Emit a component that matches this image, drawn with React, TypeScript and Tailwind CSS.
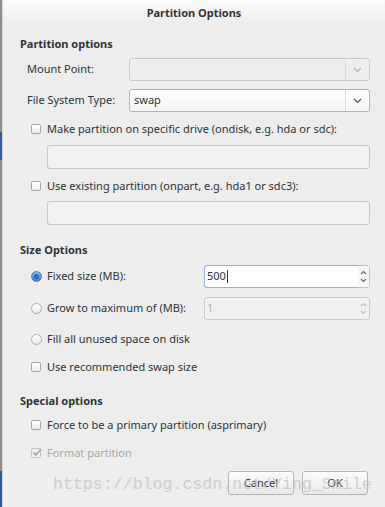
import React from 'react'

const font = { fontFamily: '"Noto Sans", "Open Sans", sans-serif' }

function Chevron({ dim = false }: { dim?: boolean }) {
  return (
    <svg width="9" height="6" viewBox="0 0 9 6" className="block">
      <path d="M1 1 L4.5 4.5 L8 1" fill="none" stroke={dim ? '#b4b4b4' : '#555753'} strokeWidth="1.2" />
    </svg>
  )
}

function Combo({ value, disabled = false }: { value?: string; disabled?: boolean }) {
  return (
    <div
      className={`flex h-[23px] flex-1 items-stretch rounded-[3px] border ${
        disabled ? 'border-[#c9c9c9] bg-[#eeeeee]' : 'border-[#b3b3b3] bg-gradient-to-b from-white to-[#f4f4f4]'
      }`}
    >
      <div className="flex flex-1 items-center pl-[4px] text-[11px] text-[#2e3436]">{value}</div>
      <div className={`flex w-[24px] items-center justify-center border-l ${disabled ? 'border-[#dcdcdc]' : 'border-[#dadada]'}`}>
        <Chevron dim={disabled} />
      </div>
    </div>
  )
}

function Checkbox({ checked = false, disabled = false }: { checked?: boolean; disabled?: boolean }) {
  return (
    <div
      className={`relative flex h-[10px] w-[10px] shrink-0 items-center justify-center rounded-[2px] border ${
        disabled ? 'border-[#c4c4c4] bg-[#f0f0f0]' : 'border-[#a8a8a8] bg-gradient-to-b from-white to-[#ececec]'
      }`}
    >
      {checked && (
        <svg width="10" height="9" viewBox="0 0 10 9" className="absolute -top-[1px] left-[0px]">
          <path d="M1.5 4.5 L4 7 L9 1" fill="none" stroke="#a8a8a8" strokeWidth="1.8" />
        </svg>
      )}
    </div>
  )
}

function Radio({ selected = false }: { selected?: boolean }) {
  return selected ? (
    <div className="flex h-[11px] w-[11px] shrink-0 items-center justify-center rounded-full border border-[#4a7fc0] bg-gradient-to-b from-[#8ab8ee] to-[#3d7dd0]">
      <div className="h-[5px] w-[5px] rounded-full bg-[#2f6bbd]" />
    </div>
  ) : (
    <div className="h-[11px] w-[11px] shrink-0 rounded-full border border-[#b0b0b0] bg-gradient-to-b from-white to-[#e8e8e8]" />
  )
}

function Spin({ value, focused = false }: { value: string; focused?: boolean }) {
  return (
    <div
      className={`flex h-[23px] w-[166px] items-stretch rounded-[3px] border ${
        focused ? 'border-[#c6c6c6] bg-white' : 'border-[#cacaca] bg-[#f0f0f0]'
      }`}
    >
      <div
        className={`flex flex-1 items-center rounded-l-[3px] pl-[2px] text-[11px] ${
          focused ? '-m-px border border-[#8fb6e6] text-[#2e3436]' : 'text-[#b0b0b0]'
        }`}
      >
        {value}
        {focused && <span className="ml-[1px] inline-block h-[13px] w-px bg-[#2e3436]" />}
      </div>
      <div className={`flex w-[11px] flex-col items-center justify-center gap-[3px] ${focused ? 'bg-[#f6f6f6]' : ''}`}>
        <svg width="7" height="5" viewBox="0 0 7 5">
          <path d="M1 4 L3.5 1.5 L6 4" fill="none" stroke={focused ? '#666' : '#c0c0c0'} strokeWidth="1.1" />
        </svg>
        <svg width="7" height="5" viewBox="0 0 7 5">
          <path d="M1 1 L3.5 3.5 L6 1" fill="none" stroke={focused ? '#666' : '#c0c0c0'} strokeWidth="1.1" />
        </svg>
      </div>
    </div>
  )
}

function Header({ children, className = '' }: { children: React.ReactNode; className?: string }) {
  return <div className={`flex h-[16px] items-center text-[11px] font-bold text-[#2e3436] ${className}`}>{children}</div>
}

function Option({ control, label, className = '', muted = false }: { control: React.ReactNode; label: string; className?: string; muted?: boolean }) {
  return (
    <div className={`flex h-[16px] items-center pl-[11px] ${className}`}>
      <div className="flex w-[16px] items-center">{control}</div>
      <span className={`text-[11px] ${muted ? 'text-[#a9a9a9]' : 'text-[#2e3436]'}`}>{label}</span>
    </div>
  )
}

function Button({ children }: { children: React.ReactNode }) {
  return (
    <button className="flex h-[24px] w-[66px] items-center justify-center rounded-[3px] border border-[#b6b6b6] bg-gradient-to-b from-[#fbfbfb] to-[#e9e9e9] text-[11px] text-[#2e3436]">
      {children}
    </button>
  )
}

export default function App() {
  return (
    <div className="relative flex h-[507px] w-[385px] overflow-hidden bg-[#ededed]" style={font}>
      <div className="flex w-[2px] flex-col bg-[#8e8e8e]">
        <div className="h-[132px]" />
        <div className="h-[28px] bg-[#2e5d9c]" />
        <div className="flex-1" />
        <div className="h-[36px] bg-[#2c5a98]" />
      </div>

      <div className="flex flex-1 flex-col border-l border-[#d6d6d6]">
        <div className="flex h-[26px] items-center justify-center bg-gradient-to-b from-[#fafafa] to-[#ececec] text-[11px] font-bold text-[#2e3436]">
          Partition Options
        </div>

        <div className="flex flex-col pl-[17px] pr-[15px]">
          <Header className="mt-[10px]">Partition options</Header>

          <div className="mt-[6px] flex items-center">
            <span className="w-[109px] pl-[7px] text-[11px] text-[#2e3436]">Mount Point:</span>
            <Combo disabled />
          </div>
          <div className="mt-[8px] flex items-center">
            <span className="w-[109px] pl-[7px] text-[11px] text-[#2e3436]">File System Type:</span>
            <Combo value="swap" />
          </div>

          <Option className="mt-[9px]" control={<Checkbox />} label="Make partition on specific drive (ondisk, e.g. hda or sdc):" />
          <div className="ml-[27px] mt-[8px] h-[24px] rounded-[3px] border border-[#c6c6c6] bg-[#f1f1f1]" />
          <Option className="mt-[9px]" control={<Checkbox />} label="Use existing partition (onpart, e.g. hda1 or sdc3):" />
          <div className="ml-[27px] mt-[7px] h-[24px] rounded-[3px] border border-[#c6c6c6] bg-[#f1f1f1]" />

          <Header className="mt-[17px]">Size Options</Header>

          <div className="mt-[7px] flex h-[23px] items-center justify-between">
            <Option control={<Radio selected />} label="Fixed size (MB):" />
            <Spin value="500" focused />
          </div>
          <div className="mt-[9px] flex h-[23px] items-center justify-between">
            <Option control={<Radio />} label="Grow to maximum of (MB):" />
            <Spin value="1" />
          </div>
          <Option className="mt-[11px]" control={<Radio />} label="Fill all unused space on disk" />
          <Option className="mt-[12px]" control={<Checkbox />} label="Use recommended swap size" />

          <Header className="mt-[18px]">Special options</Header>
          <Option className="mt-[8px]" control={<Checkbox />} label="Force to be a primary partition (asprimary)" />
          <Option className="mt-[12px]" control={<Checkbox checked disabled />} label="Format partition" muted />

          <div className="mt-[10px] flex justify-end gap-[8px] pr-[2px]">
            <Button>Cancel</Button>
            <Button>OK</Button>
          </div>
        </div>
      </div>

      <div
        className="pointer-events-none absolute left-[53px] top-[475px] whitespace-nowrap text-[16.6px] leading-[20px] text-[#c4c4c4] opacity-75"
        style={{ fontFamily: '"Liberation Mono", monospace' }}
      >
        https://blog.csdn.net/Ying_Smile
      </div>
    </div>
  )
}
